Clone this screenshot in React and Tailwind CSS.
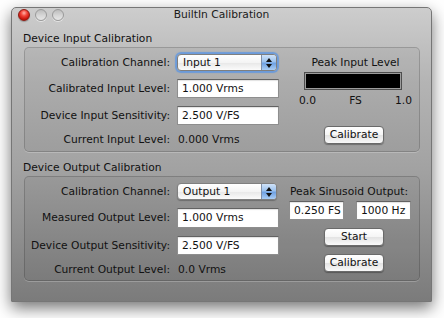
import React from "react";

const font = "font-['DejaVu_Sans',sans-serif] text-[10.7px] leading-[14px] text-[#111]";

function Light({ red }) {
  if (red) {
    return (
      <div className="w-[12px] h-[12px] rounded-full border border-[#8c1a12] bg-[radial-gradient(circle_at_50%_30%,#ffb3a8_0%,#f2453a_35%,#c8160c_70%,#9a0d06_100%)] shadow-[0_1px_1px_rgba(0,0,0,0.25)]" />
    );
  }
  return (
    <div className="w-[12px] h-[12px] rounded-full border border-[#9a9a9a] bg-[linear-gradient(#bdbdbd,#d9d9d9_60%,#e6e6e6)] shadow-[0_1px_0_rgba(255,255,255,0.5)]" />
  );
}

function Popup({ label, focused }) {
  return (
    <div
      className={
        "flex h-[17px] w-[100px] items-stretch rounded-[4px] border border-[#7f7f7f] bg-[linear-gradient(#ffffff,#f4f4f4_50%,#e7e7e7_51%,#fbfbfb)] " +
        (focused
          ? "shadow-[0_0_1px_2px_rgba(95,150,225,0.85)]"
          : "shadow-[0_1px_1px_rgba(0,0,0,0.25)]")
      }
    >
      <div className="flex-1 pl-[5px] flex items-center">{label}</div>
      <div className="w-[15px] rounded-r-[3px] border-l border-[#7f8fa8] bg-[linear-gradient(#cfe2f8,#9cc2ee_45%,#6fa1e2_55%,#a9cdf5)] flex flex-col items-center justify-center gap-[2px]">
        <svg width="6" height="4" viewBox="0 0 6 4">
          <path d="M3 0 L6 4 L0 4 Z" fill="#111" />
        </svg>
        <svg width="6" height="4" viewBox="0 0 6 4">
          <path d="M0 0 L6 0 L3 4 Z" fill="#111" />
        </svg>
      </div>
    </div>
  );
}

function Field({ value, w = "w-[102px]", h = "h-[19px]" }) {
  return (
    <div
      className={
        w +
        " " +
        h +
        " flex items-center pl-[4px] bg-white border border-[#8e8e8e] border-t-[#626262] shadow-[inset_0_1px_1px_rgba(0,0,0,0.12)]"
      }
    >
      {value}
    </div>
  );
}

function Button({ label }) {
  return (
    <div className="w-[60px] h-[18px] flex items-center justify-center rounded-[4px] border border-[#6a6a6a] bg-[linear-gradient(#ffffff,#f5f5f5_50%,#e3e3e3_51%,#f9f9f9)] shadow-[0_1px_1px_rgba(0,0,0,0.3)]">
      {label}
    </div>
  );
}

function Row({ label, children, h = "h-[19px]" }) {
  return (
    <div className={"flex items-center gap-[7px] " + h}>
      <div className="w-[145px] text-right whitespace-nowrap">{label}</div>
      {children}
    </div>
  );
}

export default function App() {
  return (
    <div className={"w-[444px] h-[318px] bg-white pt-[7px] pl-[11px] " + font}>
      <div className="w-[421px] h-[295px] rounded-t-[5px] border border-[#767676] bg-[linear-gradient(#cdcdcd,#b4b4b4_25%,#a2a2a2_55%,#7b7b7b)] shadow-[0_6px_16px_rgba(0,0,0,0.55)]">
        {/* title bar */}
        <div className="grid grid-cols-[1fr_auto_1fr] items-center h-[14px]">
          <div className="flex items-center gap-[5px] pl-[6px]">
            <Light red />
            <Light />
            <Light />
          </div>
          <div className="text-[#1a1a1a]">BuiltIn Calibration</div>
          <div />
        </div>

        <div className="px-[12px]">
          <div className="h-[14px] mt-[10px] -ml-[1px]">Device Input Calibration</div>
          <div className="mt-[1px] h-[105px] w-[396px] rounded-[5px] border border-black/[0.17] bg-black/[0.045] shadow-[0_1px_0_rgba(255,255,255,0.22)] flex">
            <div className="flex flex-col gap-[8px] pt-[6px]">
              <Row label="Calibration Channel:" h="h-[17px]">
                <Popup label="Input 1" focused />
              </Row>
              <Row label="Calibrated Input Level:">
                <Field value="1.000 Vrms" />
              </Row>
              <Row label="Device Input Sensitivity:">
                <Field value="2.500 V/FS" />
              </Row>
              <Row label="Current Input Level:" h="h-[14px]">
                <div className="pl-[1px]">0.000 Vrms</div>
              </Row>
            </div>
            <div className="ml-[20px] w-[113px] flex flex-col">
              <div className="mt-[8px] h-[14px] text-center whitespace-nowrap">Peak Input Level</div>
              <div className="mt-[2px] ml-[5px] w-[98px] h-[18px] border border-[#4e4e4e] bg-[#9c9c9c] p-[1px]">
                <div className="w-full h-full bg-black" />
              </div>
              <div className="mt-[4px] h-[14px] flex justify-between">
                <span>0.0</span>
                <span>FS</span>
                <span>1.0</span>
              </div>
              <div className="mt-[18px] ml-[25px]">
                <Button label="Calibrate" />
              </div>
            </div>
          </div>

          <div className="h-[14px] mt-[9px] -ml-[1px]">Device Output Calibration</div>
          <div className="mt-[1px] h-[105px] w-[396px] rounded-[5px] border border-black/[0.17] bg-black/[0.045] shadow-[0_1px_0_rgba(255,255,255,0.22)] flex">
            <div className="flex flex-col gap-[8px] pt-[6px]">
              <Row label="Calibration Channel:" h="h-[17px]">
                <Popup label="Output 1" />
              </Row>
              <Row label="Measured Output Level:" h="h-[20px]">
                <Field value="1.000 Vrms" h="h-[20px]" />
              </Row>
              <Row label="Device Output Sensitivity:">
                <Field value="2.500 V/FS" />
              </Row>
              <Row label="Current Output Level:" h="h-[14px]">
                <div className="pl-[1px]">0.0 Vrms</div>
              </Row>
            </div>
            <div className="ml-[10px] w-[123px] flex flex-col">
              <div className="mt-[8px] h-[14px] pl-[1px] whitespace-nowrap">Peak Sinusoid Output:</div>
              <div className="mt-[2px] flex gap-[12px]">
                <Field value="0.250 FS" w="w-[55px]" />
                <Field value="1000 Hz" w="w-[55px]" />
              </div>
              <div className="mt-[8px] ml-[35px]">
                <Button label="Start" />
              </div>
              <div className="mt-[8px] ml-[35px]">
                <Button label="Calibrate" />
              </div>
            </div>
          </div>
        </div>
      </div>
    </div>
  );
}
